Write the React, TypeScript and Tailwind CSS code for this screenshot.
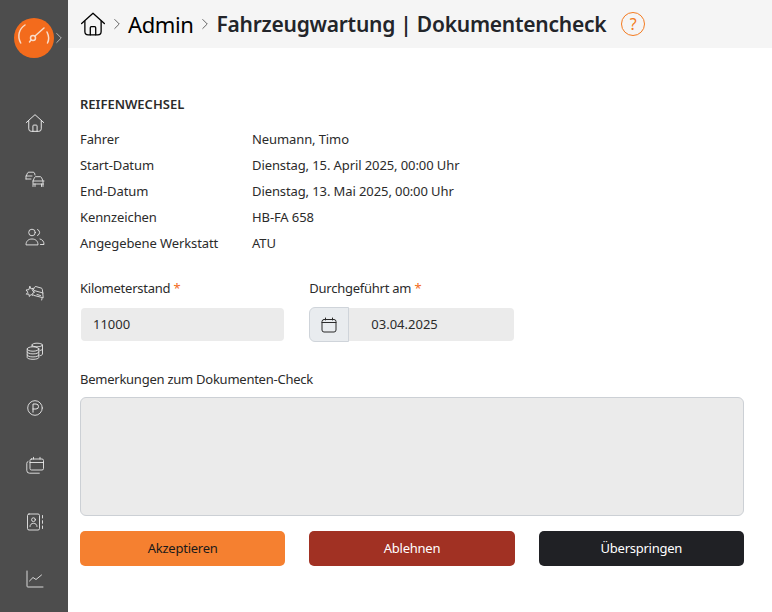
import { ChevronRight } from "lucide-react";

const font = { fontFamily: '"Noto Sans", sans-serif' };

const details = [
  ["Fahrer", "Neumann, Timo"],
  ["Start-Datum", "Dienstag, 15. April 2025, 00:00 Uhr"],
  ["End-Datum", "Dienstag, 13. Mai 2025, 00:00 Uhr"],
  ["Kennzeichen", "HB-FA 658"],
  ["Angegebene Werkstatt", "ATU"],
];

function HomeIcon({ className }: { className?: string }) {
  return (
    <svg viewBox="0 0 24 24" fill="none" stroke="currentColor" strokeWidth="1.2" strokeLinejoin="round" strokeLinecap="round" className={className}>
      <path d="M1.5 11.5 12 2l10.5 9.5" />
      <path d="M4.5 9.5V19a3 3 0 0 0 3 3h9a3 3 0 0 0 3-3V9.5" />
      <path d="M9.5 22v-6.5a1 1 0 0 1 1-1h3a1 1 0 0 1 1 1V22" />
    </svg>
  );
}

function NavIcon({ children }: { children: React.ReactNode }) {
  return (
    <svg viewBox="0 0 20 20" fill="none" stroke="#e8e8e8" strokeWidth="0.9" strokeLinecap="round" strokeLinejoin="round" className="w-[20px] h-[20px]">
      {children}
    </svg>
  );
}

const navIcons = [
  <NavIcon key="cars">
    <path d="M1 9V6.500l1.500-3.500a1.500 1.500 0 0 1 1.300-.8h4.400a1.500 1.500 0 0 1 1.300.8L10 5" />
    <path d="M1 6h6M1 9h5" />
    <path d="M8 16.500V11l1.500-3.500a1.500 1.500 0 0 1 1.300-.8h4.400a1.500 1.500 0 0 1 1.300.8L18 11v5.500" />
    <path d="M8 11h11M8.500 14h10M10 14v2.500M16.500 14v2.500" />
  </NavIcon>,
  <NavIcon key="users">
    <circle cx="7" cy="5.500" r="3.300" />
    <path d="M1 17.500c0-3.500 2.500-5.500 6-5.500s6 2 6 5.500z" />
    <path d="M12.500 2.500a3.200 3.200 0 0 1 0 6" />
    <path d="M15 12c2.500.6 4 2.500 4 5.500h-3.500" />
  </NavIcon>,
  <NavIcon key="crash">
    <path d="M5 2.500 6 5l2.200-.8L7.600 7l2 1.200-2 1 .6 2.300-2.300-1-1.500 2-.6-2.500-2.500.2 1.600-2L1 6l2.500-.3z" />
    <path d="m8.500 5.500 1-2.200a1.400 1.400 0 0 1 1.600-.7l5.200 1.500a1.400 1.400 0 0 1 1 1.200l.4 3 .5 5.500-9-2.300" />
    <path d="m9 6.500 9 2.500M12 10.500l3.500 1M17 14.500l-.3 1.500" />
  </NavIcon>,
  <NavIcon key="coins">
    <path d="M7 5.500V4c0-1 2-1.800 5-1.800S17.500 3 17.500 4v9c0 .8-1 1.400-2.500 1.700" />
    <path d="M7 4c0 1 2 1.800 5 1.800S17.500 5 17.500 4M15 9.500c1.500-.3 2.500-.9 2.500-1.500" />
    <ellipse cx="8" cy="8" rx="5.800" ry="2.200" />
    <path d="M2.200 8v8.500c0 1 2.500 1.800 5.800 1.800s5.800-.8 5.800-1.800V8" />
    <path d="M2.200 11c0 1 2.500 1.900 5.800 1.900s5.800-.9 5.800-1.900M2.200 14c0 1 2.500 1.900 5.800 1.900s5.800-.9 5.800-1.900" />
  </NavIcon>,
  <NavIcon key="parking">
    <circle cx="10" cy="10" r="7.300" />
    <path d="M8 14.200V6h3a2.500 2.500 0 0 1 0 5H8" strokeWidth="1" />
  </NavIcon>,
  <NavIcon key="calendar">
    <rect x="5" y="4" width="13.500" height="11" rx="1.500" />
    <path d="M5 7.500h13.500M8.500 2.300V4M15 2.300V4" />
    <path d="M3 6.500A1.800 1.800 0 0 0 1.800 8.300v7.200a2.700 2.700 0 0 0 2.700 2.700h9.800" />
  </NavIcon>,
  <NavIcon key="contacts">
    <rect x="2.500" y="2" width="12" height="16" rx="1.500" />
    <circle cx="8.500" cy="7.700" r="1.900" />
    <path d="M5 14.500c0-2 1.500-3.200 3.500-3.200s3.500 1.200 3.500 3.200" />
    <path d="M17.500 3.500v2.500M17.500 8.700v2.600M17.500 14v2.500" />
  </NavIcon>,
  <NavIcon key="chart">
    <path d="M2 2v15.200a.8.800 0 0 0 .8.800h15.200" />
    <path d="m4.500 12 3.500-3.500 3 2 5.500-4.500" />
  </NavIcon>,
];

function Required({ label }: { label: string }) {
  return (
    <label className="block h-[18px] text-[13px] leading-[18px] tracking-[-0.25px] text-[#2b2b2b]">
      {label} <span className="text-[#f36b1c]">*</span>
    </label>
  );
}

export default function App() {
  return (
    <div className="flex h-[612px] w-[772px] overflow-hidden bg-white" style={font}>
      <aside className="relative flex w-[68px] shrink-0 flex-col items-center bg-[#4d4d4d]">
        <div className="mt-[18px] flex h-[40px] w-[40px] items-center justify-center rounded-full bg-[#f36b1c]">
          <svg viewBox="0 0 40 40" fill="none" stroke="#f9dcc8" strokeWidth="1.5" strokeLinecap="round" className="h-[40px] w-[40px]">
            <path d="M6.700 25C3 18 5 11 11 7" />
            <path d="M33 14c2 4 2 8 .5 11" />
            <circle cx="19" cy="20" r="2.500" />
            <path d="m21 18 9-8M17 22l-1.500 2" />
          </svg>
        </div>
        <ChevronRight className="absolute left-[50px] top-[29px] h-[18px] w-[18px] text-[#d9d9d9]" strokeWidth={1} />
        <nav className="mt-[55px] ml-[2px] flex flex-col items-center gap-[37px]">
          <HomeIcon className="h-[20px] w-[20px] text-[#e8e8e8]" />
          {navIcons}
        </nav>
      </aside>

      <main className="flex min-w-0 flex-1 flex-col">
        <header className="flex h-[48px] items-center bg-[#f5f5f5] pl-[12px]">
          <HomeIcon className="h-[26px] w-[26px] text-black" />
          <ChevronRight className="ml-[2px] h-[18px] w-[18px] text-[#333]" strokeWidth={1} />
          <span className="ml-[2px] text-[22px] leading-[32px] tracking-[-0.4px] text-black">Admin</span>
          <ChevronRight className="ml-[3px] h-[18px] w-[18px] text-[#333]" strokeWidth={1} />
          <span className="ml-[2px] text-[21px] font-semibold leading-[32px] tracking-[-0.25px] text-[#23252a]">
            Fahrzeugwartung | Dokumentencheck
          </span>
          <span className="ml-[15px] flex h-[24px] w-[24px] items-center justify-center rounded-full border-[1.5px] border-[#f47b20] text-[16px] leading-none text-[#f47b20]">
            ?
          </span>
        </header>

        <div className="flex-1 pt-[47px] pl-[12px] pr-[28px]">
          <h2 className="text-[13px] font-semibold leading-[18px] text-[#2b2b2b]">REIFENWECHSEL</h2>
          <dl className="mt-[17px] grid grid-cols-[172px_1fr] gap-y-[8px] text-[13px] leading-[18px] tracking-[-0.1px] text-[#2b2b2b]">
            {details.map(([k, v]) => (
              <div key={k} className="contents">
                <dt>{k}</dt>
                <dd>{v}</dd>
              </div>
            ))}
          </dl>

          <div className="mt-[27px] grid grid-cols-3 gap-x-6">
            <div>
              <Required label="Kilometerstand" />
              <div className="mt-[11px] mx-px flex h-[33px] items-center rounded-[4px] bg-[#ebebeb] pl-[12px] text-[13px] text-[#2b2b2b]">
                11000
              </div>
            </div>
            <div>
              <Required label="Durchgeführt am" />
              <div className="mt-[10px] mr-px flex h-[35px] items-center">
                <span className="flex h-[35px] w-[40px] shrink-0 items-center justify-center rounded-l-[6px] border border-[#cfd4da] bg-[#e9ecef]">
                  <svg viewBox="0 0 16 16" fill="none" stroke="#2b2b2b" strokeWidth="1" strokeLinecap="round" className="h-[16px] w-[16px]">
                    <rect x="1" y="2.500" width="14" height="12.500" rx="2" />
                    <path d="M1 5.500h14M4.500 1v2M11.500 1v2" />
                  </svg>
                </span>
                <div className="flex h-[33px] flex-1 items-center rounded-r-[4px] bg-[#ebebeb] pl-[22px] text-[13px] text-[#2b2b2b]">
                  03.04.2025
                </div>
              </div>
            </div>
          </div>

          <label className="mt-[28px] block text-[13px] leading-[18px] tracking-[-0.25px] text-[#2b2b2b]">
            Bemerkungen zum Dokumenten-Check
          </label>
          <div className="mt-[9px] h-[119px] rounded-[6px] border border-[#ccd0d5] bg-[#ebebeb]" />

          <div className="mt-[15px] grid grid-cols-3 gap-x-6">
            <button className="h-[35px] rounded-[5px] bg-[#f58030] text-[13px] tracking-[-0.25px] text-[#1a1a1a]">Akzeptieren</button>
            <button className="h-[35px] rounded-[5px] bg-[#a13123] text-[13px] tracking-[-0.25px] text-white">Ablehnen</button>
            <button className="h-[35px] rounded-[5px] bg-[#202125] text-[13px] tracking-[-0.25px] text-white">Überspringen</button>
          </div>
        </div>
      </main>
    </div>
  );
}
